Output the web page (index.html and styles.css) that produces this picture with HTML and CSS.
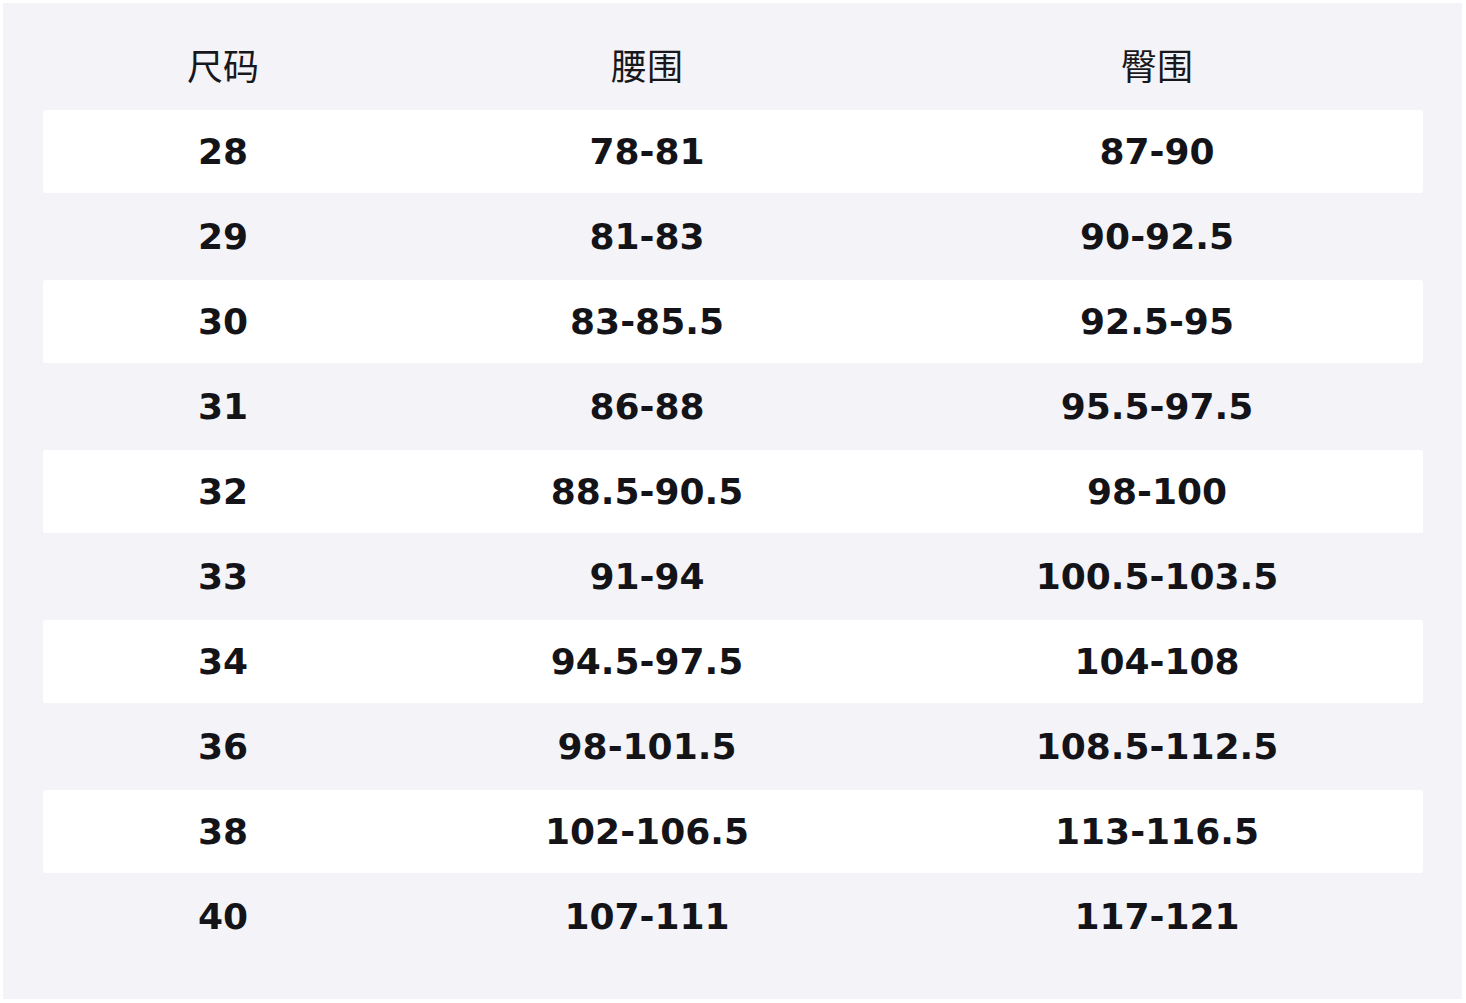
FILE: index.html
```html
<!DOCTYPE html>
<html lang="zh">
<head>
<meta charset="utf-8">
<title>尺码表</title>
<link rel="stylesheet" href="styles.css">
</head>
<body>
<div class="sheet">
  <div class="row head">
    <div>尺码</div><div>腰围</div><div>臀围</div>
  </div>
  <div class="row alt"><div>28</div><div>78-81</div><div>87-90</div></div>
  <div class="row"><div>29</div><div>81-83</div><div>90-92.5</div></div>
  <div class="row alt"><div>30</div><div>83-85.5</div><div>92.5-95</div></div>
  <div class="row"><div>31</div><div>86-88</div><div>95.5-97.5</div></div>
  <div class="row alt"><div>32</div><div>88.5-90.5</div><div>98-100</div></div>
  <div class="row"><div>33</div><div>91-94</div><div>100.5-103.5</div></div>
  <div class="row alt"><div>34</div><div>94.5-97.5</div><div>104-108</div></div>
  <div class="row"><div>36</div><div>98-101.5</div><div>108.5-112.5</div></div>
  <div class="row alt"><div>38</div><div>102-106.5</div><div>113-116.5</div></div>
  <div class="row"><div>40</div><div>107-111</div><div>117-121</div></div>
</div>
</body>
</html>
```

FILE: styles.css
```css
html, body {
  margin: 0;
  padding: 0;
  background: #ffffff;
}
body {
  padding: 3px 4px 4px 3px;
}
.sheet {
  background: #f3f3f8;
  height: 996px;
  box-sizing: border-box;
  padding: 21px 39px 0 40px;
  color: #141418;
  font-family: "DejaVu Sans", "Noto Sans CJK SC", sans-serif;
}
.row {
  display: grid;
  grid-template-columns: 360px 488px 532px;
  height: 85px;
  box-sizing: border-box;
  align-items: center;
  text-align: center;
  font-size: 36px;
  font-weight: bold;
  border-top: 1px solid transparent;
  border-bottom: 1px solid transparent;
  background-clip: padding-box;
  border-radius: 3px;
}
.row.alt {
  background-color: #ffffff;
}
.row.head {
  font-family: "Noto Sans CJK SC", sans-serif;
  font-weight: normal;
  font-size: 36px;
  color: #18181c;
  padding-bottom: 6px;
}
```
